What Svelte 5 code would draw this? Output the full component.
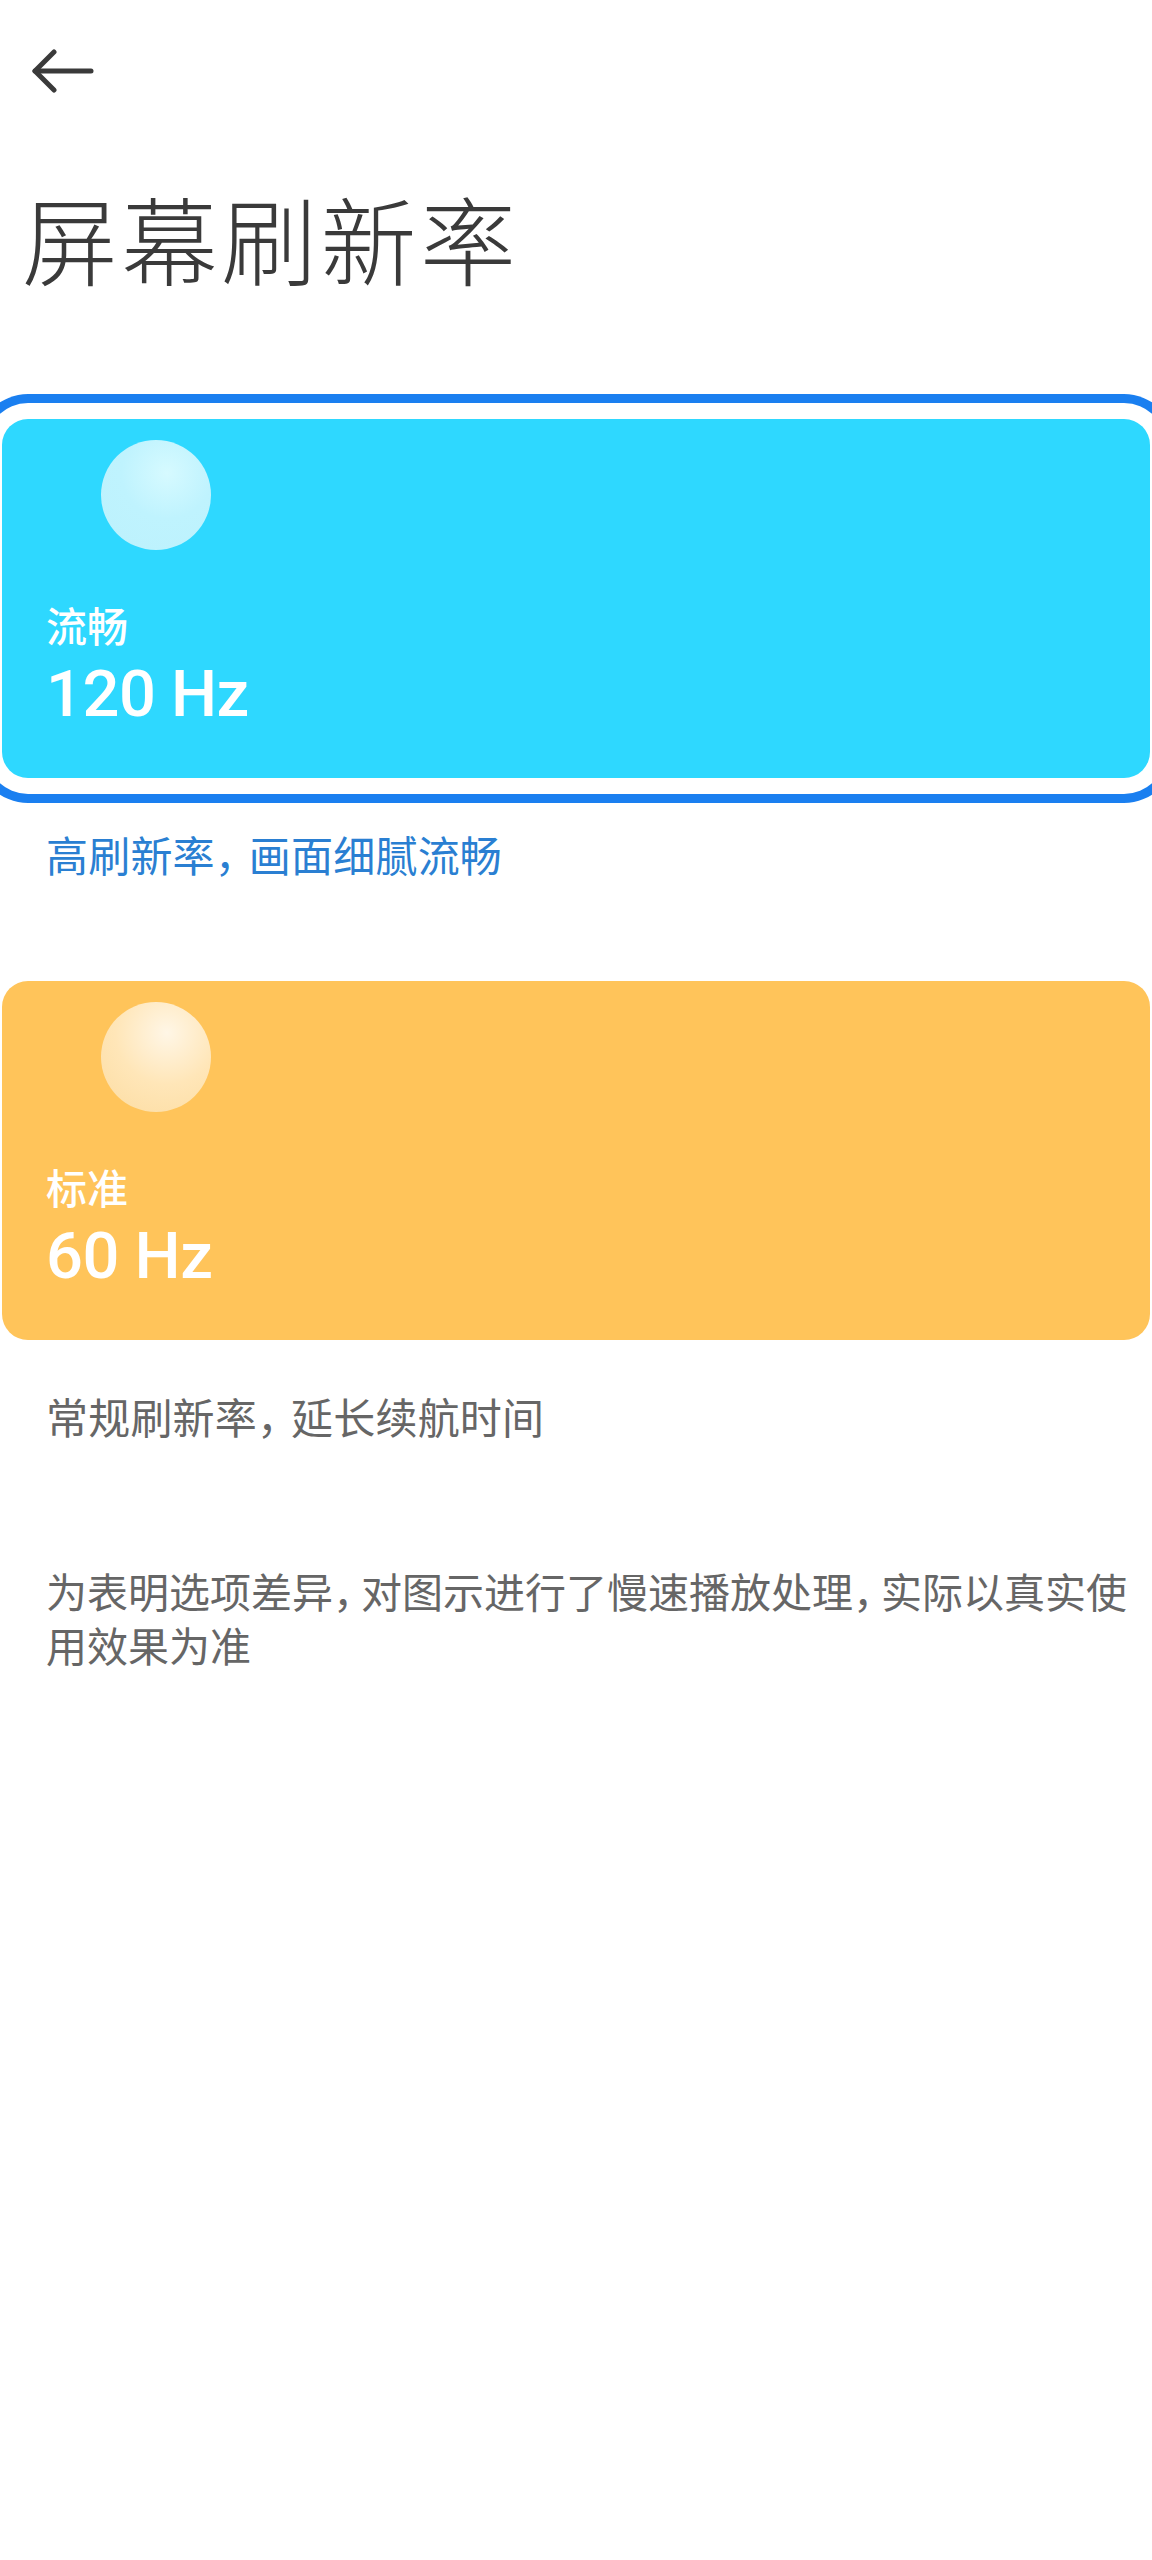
<script>
  const modes = [
    { name: '流畅', hz: '120 Hz', tone: 'blue', on: true, before: '高刷新率', after: '画面细腻流畅' },
    { name: '标准', hz: '60 Hz', tone: 'amber', on: false, before: '常规刷新率', after: '延长续航时间' },
  ]
</script>

<main>
  <button class="back" aria-label="返回">
    <svg width="64" height="44" viewBox="0 0 64 44" fill="none" stroke="#3a3a3a" stroke-width="5" stroke-linecap="round" stroke-linejoin="round">
      <path d="M4 22H60" />
      <path d="M23 3L4 22L23 41" />
    </svg>
  </button>

  <h1>屏幕刷新率</h1>

  {#each modes as mode}
    <section class="mode">
      <div class="card {mode.tone}" class:on={mode.on}>
        <div class="ball"></div>
        <div class="name">{mode.name}</div>
        <div class="hz">{mode.hz}</div>
      </div>
      <p class="desc" class:on={mode.on}>{mode.before}<span class="comma">&#xFF0C;</span>{mode.after}</p>
    </section>
  {/each}

  <p class="note">为表明选项差异<span class="comma">&#xFF0C;</span>对图示进行了慢速播放处理<span class="comma">&#xFF0C;</span>实际以真实使用效果为准</p>
</main>

<style>
  :global(body) {
    background: #fff;
    overflow-x: hidden;
  }
  main {
    min-height: 2560px;
    font-family: 'Noto Sans CJK SC', 'Noto Sans', sans-serif;
    box-sizing: border-box;
    padding-top: 49px;
  }
  .back {
    display: block;
    margin-left: 31px;
    padding: 0;
    border: unset;
    background: none;
    height: 44px;
  }
  h1 {
    margin: 74px 0 0 22px;
    font-size: 96px;
    line-height: 140px;
    font-weight: 300;
    letter-spacing: 3.5px;
    color: #3a3a3a;
  }
  .mode + .mode {
    margin-top: 99px;
  }
  h1 + .mode {
    margin-top: 112px;
  }
  .card {
    height: 359px;
    margin: 0 2px;
    padding-top: 21px;
    box-sizing: border-box;
    border-radius: 26px;
    color: #fff;
  }
  .blue {
    background: #2ed8ff;
  }
  .amber {
    background: #ffc45a;
  }
  .card.on {
    box-shadow: 0 0 0 16px #fff, 0 0 0 25px #1a7ff0;
  }
  .ball {
    width: 110px;
    height: 110px;
    margin-left: 99px;
    border-radius: 50%;
  }
  .blue .ball {
    background: radial-gradient(circle at 60% 30%, #d6faff 0, #bff3fe 45%, #bdf2fd 80%, #d4f8ff 100%);
  }
  .amber .ball {
    background: radial-gradient(circle at 60% 28%, #fff6e6 0, #ffe6b8 50%, #fde0aa 80%, #ffe9c4 100%);
  }
  .name {
    margin: 44px 0 0 44px;
    font-size: 41px;
    line-height: 60px;
    font-weight: 500;
  }
  .hz {
    margin-left: 44px;
    font-family: Roboto, sans-serif;
    font-size: 65px;
    line-height: 80px;
    font-weight: 500;
    letter-spacing: -0.5px;
  }
  .desc {
    margin: 48px 0 0 46px;
    font-size: 42px;
    line-height: 56px;
    letter-spacing: 0.2px;
    color: #666;
  }
  .desc.on {
    color: #2a7fd2;
  }
  .comma {
    letter-spacing: -8px;
  }
  .note {
    margin: 119px 0 0 46px;
    font-size: 41px;
    line-height: 54px;
    color: #666;
  }
  .note .comma {
    letter-spacing: -13px;
  }
</style>
